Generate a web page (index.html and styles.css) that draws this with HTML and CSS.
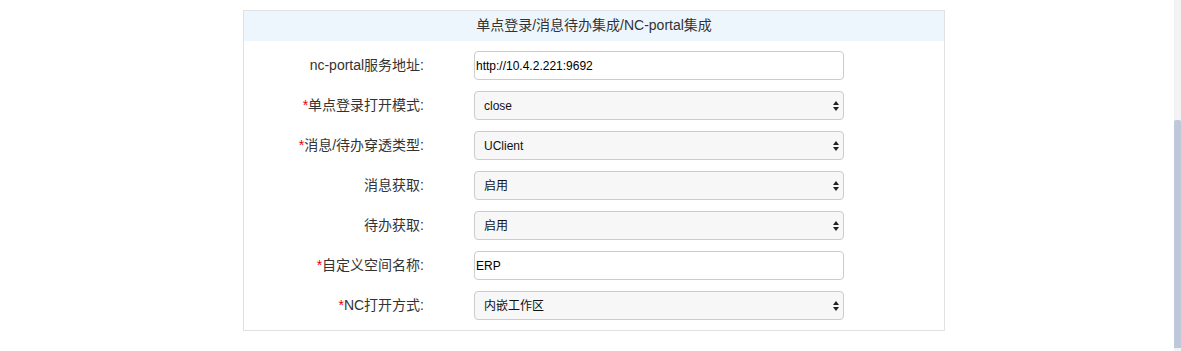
FILE: index.html
```html
<!DOCTYPE html>
<html>
  <head>
    <title>NC-portal集成</title>
    <link rel="stylesheet" href="styles.css">
  </head>
  <body>
    <div class="page">
      <div class="content">
        <div class="panel">
          <div class="panel-title">单点登录/消息待办集成/NC-portal集成</div>
          <form class="form-grid">
            <label class="label">nc-portal服务地址:</label>
            <input class="field" type="text" value="http://10.4.2.221:9692" />

            <label class="label"><span class="req">*</span>单点登录打开模式:</label>
            <div class="select-wrap">
              <select class="field select"><option>close</option></select>
              <svg class="arrows" width="6" height="10" viewBox="0 0 6 10"><path d="M3 0 L6 4 L0 4 Z M0 6 L6 6 L3 10 Z" fill="#222"/></svg>
            </div>

            <label class="label"><span class="req">*</span>消息/待办穿透类型:</label>
            <div class="select-wrap">
              <select class="field select"><option>UClient</option></select>
              <svg class="arrows" width="6" height="10" viewBox="0 0 6 10"><path d="M3 0 L6 4 L0 4 Z M0 6 L6 6 L3 10 Z" fill="#222"/></svg>
            </div>

            <label class="label">消息获取:</label>
            <div class="select-wrap">
              <select class="field select"><option>启用</option></select>
              <svg class="arrows" width="6" height="10" viewBox="0 0 6 10"><path d="M3 0 L6 4 L0 4 Z M0 6 L6 6 L3 10 Z" fill="#222"/></svg>
            </div>

            <label class="label">待办获取:</label>
            <div class="select-wrap">
              <select class="field select"><option>启用</option></select>
              <svg class="arrows" width="6" height="10" viewBox="0 0 6 10"><path d="M3 0 L6 4 L0 4 Z M0 6 L6 6 L3 10 Z" fill="#222"/></svg>
            </div>

            <label class="label"><span class="req">*</span>自定义空间名称:</label>
            <input class="field" type="text" value="ERP" />

            <label class="label"><span class="req">*</span>NC打开方式:</label>
            <div class="select-wrap">
              <select class="field select"><option>内嵌工作区</option></select>
              <svg class="arrows" width="6" height="10" viewBox="0 0 6 10"><path d="M3 0 L6 4 L0 4 Z M0 6 L6 6 L3 10 Z" fill="#222"/></svg>
            </div>
          </form>
        </div>
      </div>
      <div class="scrollbar">
        <div class="thumb"></div>
      </div>
    </div>
  </body>
</html>
```

FILE: styles.css
```css
html,
body {
  margin: 0;
  height: 100%;
  background: #fff;
  font-family: "Liberation Sans", "Noto Sans CJK SC", sans-serif;
  color: #333;
}
.page {
  display: flex;
  height: 351px;
  overflow: hidden;
}
.content {
  flex: 1;
  padding: 10px 0 0 243px;
}
.panel {
  width: 700px;
  border: 1px solid #e1e1e1;
  background: #fff;
}
.panel-title {
  height: 30px;
  line-height: 29px;
  text-align: center;
  font-size: 14px;
  color: #333;
  background-color: #eef6fd;
}
.form-grid {
  display: grid;
  grid-template-columns: 180px 370px;
  column-gap: 50px;
  row-gap: 11px;
  padding: 10px 0 10px 0;
  margin: 0;
}
.label {
  height: 29px;
  line-height: 29px;
  text-align: right;
  font-size: 14px;
  color: #333;
}
.req {
  color: #e00;
}
.field {
  box-sizing: border-box;
  width: 370px;
  height: 29px;
  margin: 0;
  padding: 0 0 0 1px;
  border: 1px solid #ccc;
  border-radius: 4px;
  background: #fff;
  font-family: "Liberation Sans", "Noto Sans CJK SC", sans-serif;
  font-size: 12px;
  color: #000;
  outline: none;
}
.select-wrap {
  position: relative;
  width: 370px;
  height: 29px;
}
.select {
  -webkit-appearance: none;
  appearance: none;
  padding-left: 9px;
  background: #f7f7f7;
  color: #111;
}
.arrows {
  position: absolute;
  right: 5px;
  top: 10px;
  pointer-events: none;
}
.scrollbar {
  width: 7px;
  background: #f3f3f3;
  display: flex;
  flex-direction: column;
  padding-top: 120px;
}
.thumb {
  height: 228px;
  background: #bfc8da;
  border-radius: 2px 2px 0 0;
}
```
